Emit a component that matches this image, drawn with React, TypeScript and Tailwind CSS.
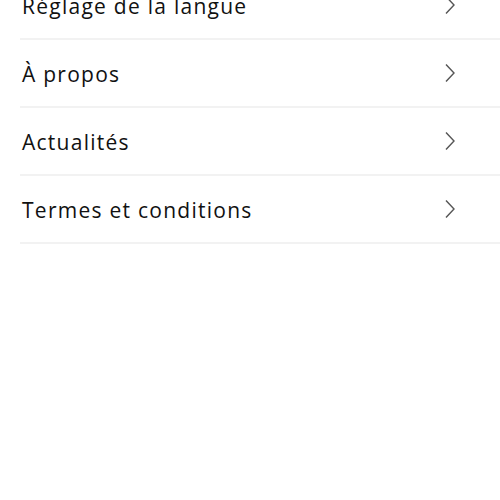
import React from 'react';

const items = ['Réglage de la langue', 'À propos', 'Actualités', 'Termes et conditions'];

function Chevron() {
  return (
    <svg width="12" height="20" viewBox="0 0 12 20" fill="none" className="text-[#555]">
      <path d="M2 1.5 L10 10 L2 18.5" stroke="currentColor" strokeWidth="1.4" />
    </svg>
  );
}

export default function App() {
  return (
    <div className="w-[500px] h-[500px] bg-white overflow-hidden" style={{ fontFamily: '"Open Sans", sans-serif' }}>
      <div className="-mt-[28px] pl-5">
        {items.map((label) => (
          <div key={label} className="h-[68px] flex items-center justify-between border-b-2 border-[#f2f2f2] pl-[2px] pr-[44px]">
            <span className="text-[21px] tracking-[0.06em] text-[#111] pt-[3px]">{label}</span>
            <Chevron />
          </div>
        ))}
      </div>
    </div>
  );
}
